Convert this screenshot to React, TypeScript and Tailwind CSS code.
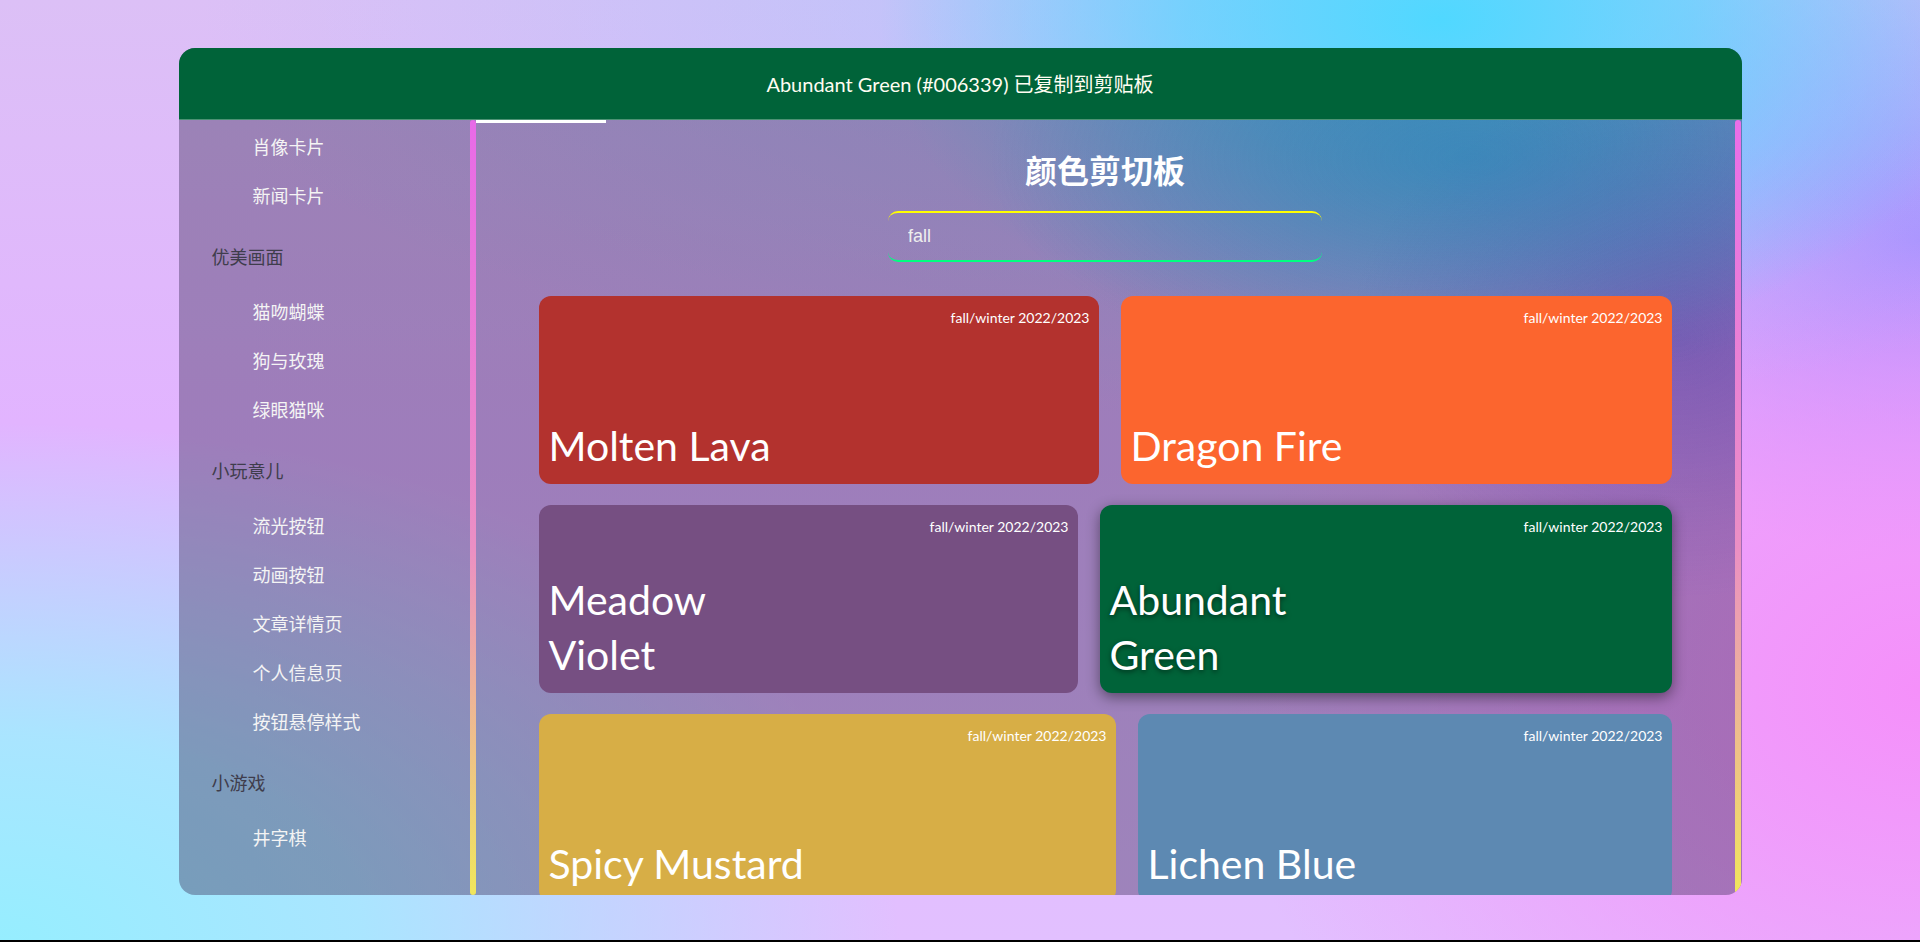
import React from "react"

type NavEntry = { label: string; group?: boolean }

const navItems: NavEntry[] = [
  { label: "肖像卡片" },
  { label: "新闻卡片" },
  { label: "优美画面", group: true },
  { label: "猫吻蝴蝶" },
  { label: "狗与玫瑰" },
  { label: "绿眼猫咪" },
  { label: "小玩意儿", group: true },
  { label: "流光按钮" },
  { label: "动画按钮" },
  { label: "文章详情页" },
  { label: "个人信息页" },
  { label: "按钮悬停样式" },
  { label: "小游戏", group: true },
  { label: "井字棋" },
]

const colors = [
  { name: "Molten Lava", lines: ["Molten Lava"], bg: "bg-[#b3322e]", width: "w-[560px]" },
  { name: "Dragon Fire", lines: ["Dragon Fire"], bg: "bg-[#fc652e]", width: "w-[551px]" },
  { name: "Meadow Violet", lines: ["Meadow", "Violet"], bg: "bg-[#764f82]", width: "w-[539px]" },
  { name: "Abundant Green", lines: ["Abundant", "Green"], bg: "bg-[#006339]", width: "w-[572px]", active: true },
  { name: "Spicy Mustard", lines: ["Spicy Mustard"], bg: "bg-[#d7ae46]", width: "w-[577px]" },
  { name: "Lichen Blue", lines: ["Lichen Blue"], bg: "bg-[#5d89b2]", width: "w-[534px]" },
]

function Sidebar() {
  return (
    <aside className="w-[291px] shrink-0 overflow-hidden pt-[2px] font-['Noto_Sans_CJK_SC',sans-serif] text-[18px]">
      {navItems.map((item) =>
        item.group ? (
          <div key={item.label} className="mt-[12px] mb-[6px] flex h-[49px] items-center pl-[33px] text-[#3f3d4c]">
            {item.label}
          </div>
        ) : (
          <div key={item.label} className="flex h-[49px] items-center pl-[74px] text-[#f4f4f4]">
            {item.label}
          </div>
        )
      )}
    </aside>
  )
}

function ColorCard({ card }: { card: (typeof colors)[number] }) {
  return (
    <div
      className={`${card.bg} ${card.width} flex h-[188px] flex-col justify-between rounded-[12px] text-white font-['Lato',sans-serif] ${
        card.active ? "shadow-[0_4px_14px_rgba(0,0,0,0.45)]" : ""
      }`}
    >
      <div className="self-end pt-[12px] pr-[9px] text-[14px] leading-[20px]">fall/winter 2022/2023</div>
      <div
        className={`pl-[10px] pb-[11px] text-[41px] leading-[55px] ${
          card.active ? "[text-shadow:0_2px_5px_rgba(0,0,0,0.5)]" : ""
        }`}
      >
        {card.lines.map((line) => (
          <div key={line}>{line}</div>
        ))}
      </div>
    </div>
  )
}

export default function App() {
  return (
    <div className="w-full">
      <div className="flex h-[940px] w-full justify-center pt-[48px] bg-[radial-gradient(ellipse_560px_340px_at_1440px_20px,#50d8ff_0%,rgba(80,216,255,0.65)_45%,transparent_100%),radial-gradient(ellipse_1100px_420px_at_1300px_0px,rgba(150,200,255,0.55)_0%,transparent_100%),radial-gradient(ellipse_700px_560px_at_1920px_690px,#f590fa_0%,rgba(245,144,250,0.55)_50%,transparent_100%),radial-gradient(ellipse_900px_520px_at_0px_942px,#96eeff_0%,rgba(160,236,255,0.85)_40%,transparent_100%),radial-gradient(ellipse_380px_320px_at_1920px_240px,#9c90ff_0%,transparent_100%),linear-gradient(180deg,#dcc0f6_0%,#e2b4ff_45%,#e2c0ff_100%)]">
        <div className="flex h-[847px] w-[1563px] flex-col overflow-hidden rounded-[16px] bg-[radial-gradient(ellipse_480px_230px_at_1290px_110px,rgba(30,130,185,0.5)_0%,transparent_100%),radial-gradient(ellipse_330px_260px_at_1500px_290px,rgba(70,50,170,0.35)_0%,transparent_100%),linear-gradient(rgba(57,43,85,0.4),rgba(57,43,85,0.4))]">
          {/* copied notice */}
          <header className="flex h-[72px] shrink-0 items-center justify-center border-b border-white/30 bg-[#006339] font-['Lato','Noto_Sans_CJK_SC',sans-serif] text-[20px] text-[#fffdf2]">
            Abundant Green (#006339) 已复制到剪贴板
          </header>

          <div className="flex min-h-0 flex-1">
            <Sidebar />
            <div className="w-[6px] shrink-0 rounded-full bg-[linear-gradient(180deg,#e86ae8_0%,#eb8fc4_55%,#f0e65c_100%)]" />

            <main className="flex min-w-0 flex-1 flex-col overflow-hidden">
              <div className="h-[3px] w-[130px] shrink-0 bg-white" />
              <h1 className="mt-[26px] text-center font-['Noto_Sans_CJK_SC',sans-serif] text-[32px] font-bold leading-[40px] text-white">
                颜色剪切板
              </h1>
              <input
                readOnly
                value="fall"
                className="mx-auto mt-[22px] h-[51px] w-[434px] shrink-0 rounded-[10px] border-t-2 border-b-2 border-t-[#ffff00] border-b-[#00ff80] bg-transparent px-[20px] font-['Liberation_Sans',sans-serif] text-[18px] text-[#eeeeee] outline-none"
              />
              <div className="mx-auto mt-[34px] flex w-[1133px] flex-wrap gap-x-[22px] gap-y-[21px]">
                {colors.map((card) => (
                  <ColorCard key={card.name} card={card} />
                ))}
              </div>
            </main>

            <div className="mr-px w-[6px] shrink-0 rounded-full bg-[linear-gradient(180deg,#ea6ee8_0%,#eb8fc4_55%,#f0e65c_100%)]" />
          </div>
        </div>
      </div>
      <div className="h-[2px] bg-black" />
    </div>
  )
}
